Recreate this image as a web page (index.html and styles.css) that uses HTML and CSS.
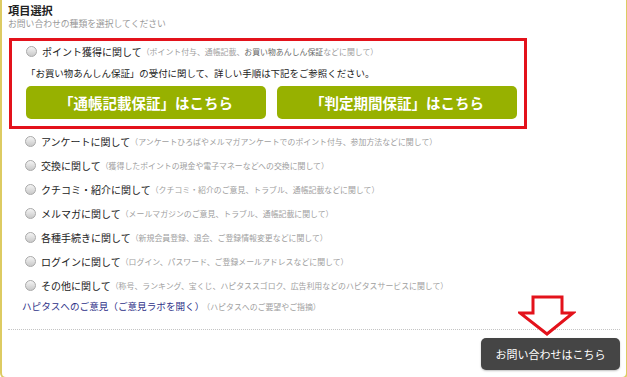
FILE: index.html
```html
<!DOCTYPE html>
<html lang="ja">
<head>
<meta charset="utf-8">
<title>項目選択</title>
<link rel="stylesheet" href="styles.css">
</head>
<body>
<div class="panel">
  <h2 class="title">項目選択</h2>
  <p class="sub">お問い合わせの種類を選択してください</p>

  <div class="highlight">
    <div class="opt first"><span class="radio"></span><span class="lbl">ポイント獲得に関して</span><span class="note">（ポイント付与、通帳記載、<b>お買い物あんしん保証</b>などに関して）</span></div>
    <p class="info">「お買い物あんしん保証」の受付に関して、詳しい手順は下記をご参照ください。</p>
    <div class="btns">
      <a class="gbtn">「通帳記載保証」はこちら</a>
      <a class="gbtn">「判定期間保証」はこちら</a>
    </div>
  </div>

  <ul class="opts">
    <li class="opt"><span class="radio"></span><span class="lbl">アンケートに関して</span><span class="note">（アンケートひろばやメルマガアンケートでのポイント付与、参加方法などに関して）</span></li>
    <li class="opt"><span class="radio"></span><span class="lbl">交換に関して</span><span class="note">（獲得したポイントの現金や電子マネーなどへの交換に関して）</span></li>
    <li class="opt"><span class="radio"></span><span class="lbl">クチコミ・紹介に関して</span><span class="note">（クチコミ・紹介のご意見、トラブル、通帳記載などに関して）</span></li>
    <li class="opt"><span class="radio"></span><span class="lbl">メルマガに関して</span><span class="note">（メールマガジンのご意見、トラブル、通帳記載に関して）</span></li>
    <li class="opt"><span class="radio"></span><span class="lbl">各種手続きに関して</span><span class="note">（新規会員登録、退会、ご登録情報変更などに関して）</span></li>
    <li class="opt"><span class="radio"></span><span class="lbl">ログインに関して</span><span class="note">（ログイン、パスワード、ご登録メールアドレスなどに関して）</span></li>
    <li class="opt"><span class="radio"></span><span class="lbl">その他に関して</span><span class="note">（称号、ランキング、宝くじ、ハピタススゴロク、広告利用などのハピタスサービスに関して）</span></li>
  </ul>

  <p class="linkrow"><a class="link">ハピタスへのご意見（ご意見ラボを開く）</a><span class="note">（ハピタスへのご要望やご指摘）</span></p>

  <div class="foot">
    <a class="dbtn">お問い合わせはこちら</a>
  </div>

  <svg class="arrow" width="58" height="42" viewBox="0 0 58 42">
    <polygon points="15,2 44,2 44,18 55,18 29,39 2,18 15,18" fill="#fff" stroke="#e3121b" stroke-width="3" stroke-linejoin="miter"/>
  </svg>
</div>
</body>
</html>
```

FILE: styles.css
```css
html, body {
  margin: 0;
  padding: 0;
  background: #fff;
}
body {
  font-family: "Noto Sans CJK JP", "Noto Sans", sans-serif;
  color: #333;
}
.panel {
  position: relative;
  box-sizing: border-box;
  width: 628px;
  height: 379px;
  border: 2px solid #ddcb62;
  border-top: 0;
  border-radius: 0 0 6px 6px;
  padding: 0 6px;
  overflow: hidden;
}
.title {
  margin: 0;
  padding-top: 3px;
  font-size: 11.2px;
  line-height: 15px;
  font-weight: bold;
  color: #222;
}
.sub {
  margin: 0;
  font-size: 8.8px;
  line-height: 12px;
  color: #999;
}
.highlight {
  margin: 8px 0 0 1px;
  width: 518px;
  box-sizing: border-box;
  border: 3px solid #e3121b;
  padding: 0 7px 7px 14px;
}
.opt {
  display: flex;
  align-items: center;
  height: 24px;
  white-space: nowrap;
}
.opt.first {
  height: 20px;
}
.radio {
  width: 9px;
  height: 9px;
  border: 1px solid #a9a9a9;
  border-radius: 50%;
  background: linear-gradient(#f4f4f4, #c9c9c9);
  margin-right: 5px;
  flex: none;
}
.opts .radio {
  margin-left: 17px;
}
.lbl {
  font-size: 10px;
  color: #222;
}
.note {
  font-size: 7.9px;
  color: #a0a0a0;
}
.note b {
  font-weight: normal;
  color: #666;
}
.info {
  margin: 5px 0 0;
  font-size: 9.45px;
  line-height: 14px;
  color: #222;
}
.btns {
  display: flex;
  gap: 11px;
  margin-top: 6px;
}
.gbtn {
  width: 240px;
  height: 33px;
  border-radius: 5px;
  background: #97b100;
  color: #fff;
  font-size: 14.5px;
  font-weight: bold;
  display: flex;
  align-items: center;
  justify-content: center;
}
.opts {
  list-style: none;
  margin: 0;
  padding: 0;
}
.linkrow {
  margin: 2px 0 0 14px;
  font-size: 9.6px;
  line-height: 14px;
  white-space: nowrap;
}
.link {
  color: #2e3188;
}
.linkrow .note {
  margin-left: 2px;
}
.foot {
  margin-top: 15px;
  border-top: 1px dotted #c4c4c4;
  padding-top: 8px;
  display: flex;
  justify-content: flex-end;
}
.dbtn {
  width: 139px;
  height: 32px;
  border-radius: 5px;
  background: #454545;
  color: #fff;
  font-size: 11px;
  display: flex;
  align-items: center;
  justify-content: center;
  box-shadow: 0 1px 2px rgba(0,0,0,0.25);
}
.arrow {
  position: absolute;
  left: 516px;
  top: 295px;
}
```
